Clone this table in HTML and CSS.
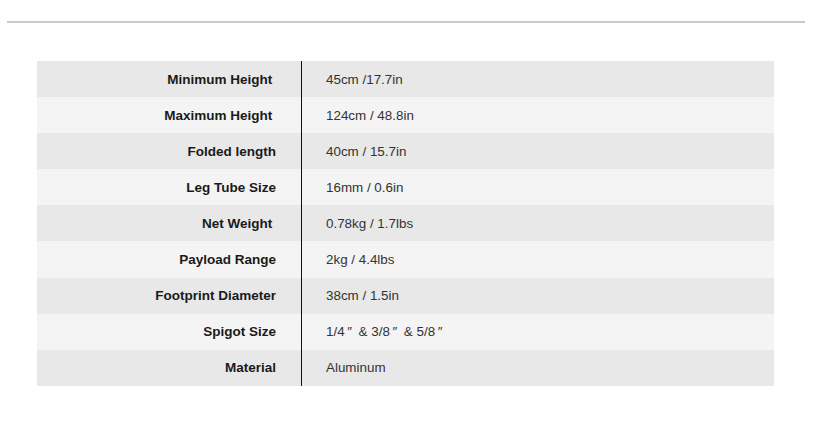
FILE: index.html
```html
<!DOCTYPE html>
<html>
<head>
<meta charset="utf-8">
<link rel="stylesheet" href="styles.css">
</head>
<body>
<div class="page">
  <div class="rule"></div>
  <div class="specs">
    <div class="row"><div class="label">Minimum Height&nbsp;</div><div class="value">45cm /17.7in</div></div>
    <div class="row"><div class="label">Maximum Height&nbsp;</div><div class="value">124cm / 48.8in</div></div>
    <div class="row"><div class="label">Folded length</div><div class="value">40cm / 15.7in</div></div>
    <div class="row"><div class="label">Leg Tube Size</div><div class="value">16mm / 0.6in</div></div>
    <div class="row"><div class="label">Net Weight&nbsp;</div><div class="value">0.78kg / 1.7lbs</div></div>
    <div class="row"><div class="label">Payload Range</div><div class="value">2kg / 4.4lbs</div></div>
    <div class="row"><div class="label">Footprint Diameter</div><div class="value">38cm / 1.5in</div></div>
    <div class="row"><div class="label">Spigot Size</div><div class="value">1/4<span class="dq">″</span> &amp; 3/8<span class="dq">″</span> &amp; 5/8<span class="dq">″</span></div></div>
    <div class="row"><div class="label">Material</div><div class="value">Aluminum</div></div>
  </div>
</div>
</body>
</html>
```
FILE: styles.css
```css
html, body {
  margin: 0;
  padding: 0;
  background: #ffffff;
}
.page {
  padding: 21px 12px 0 7px;
  font-family: "Liberation Sans", Arial, sans-serif;
}
.rule {
  height: 2px;
  background: #c9c9c9;
}
.specs {
  margin: 38px 31px 0 30px;
  display: flex;
  flex-direction: column;
}
.row {
  display: grid;
  grid-template-columns: 265px 1fr;
  height: 36.1px;
  align-items: center;
  background: #e8e8e8;
}
.row:nth-child(even) {
  background: #f4f4f4;
}
.label {
  height: 100%;
  display: flex;
  align-items: center;
  justify-content: flex-end;
  padding-right: 25px;
  border-right: 1px solid #111;
  font-size: 13.5px;
  font-weight: bold;
  color: #1a1a1a;
  white-space: pre;
}
.value {
  padding-left: 24px;
  font-size: 13.4px;
  color: #333;
}
.dq {
  padding: 0 3px 0 2.5px;
}
```
